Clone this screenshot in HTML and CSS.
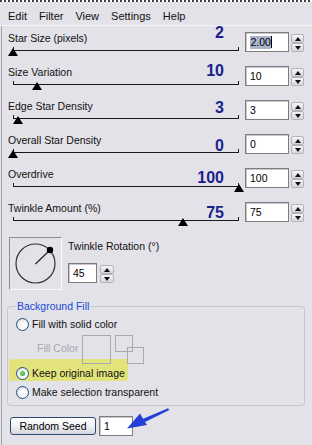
FILE: index.html
```html
<!DOCTYPE html>
<html>
<head>
<meta charset="utf-8">
<link rel="stylesheet" href="styles.css">
</head>
<body>
<div class="marquee"></div>
<div class="menubar"><span>Edit</span><span>Filter</span><span>View</span><span>Settings</span><span>Help</span></div>
<div class="panel">
  <div class="row">
    <div class="slider">
      <div class="label">Star Size (pixels)</div>
      <div class="track"><span class="thumb" style="left:0px"></span></div>
      <span class="anno" style="top:-7px">2</span>
    </div>
    <div class="field"><span class="hl">2.00</span><span class="caret"></span></div>
    <div class="spin"><span class="sb up"></span><span class="sb down"></span></div>
  </div>
  <div class="row">
    <div class="slider">
      <div class="label">Size Variation</div>
      <div class="track"><span class="thumb" style="left:24px"></span></div>
      <span class="anno" style="top:-3px">10</span>
    </div>
    <div class="field">10</div>
    <div class="spin"><span class="sb up"></span><span class="sb down"></span></div>
  </div>
  <div class="row">
    <div class="slider">
      <div class="label">Edge Star Density</div>
      <div class="track"><span class="thumb" style="left:5px"></span></div>
      <span class="anno" style="top:0px">3</span>
    </div>
    <div class="field">3</div>
    <div class="spin"><span class="sb up"></span><span class="sb down"></span></div>
  </div>
  <div class="row">
    <div class="slider">
      <div class="label">Overall Star Density</div>
      <div class="track"><span class="thumb" style="left:0px"></span></div>
      <span class="anno" style="top:4px">0</span>
    </div>
    <div class="field">0</div>
    <div class="spin"><span class="sb up"></span><span class="sb down"></span></div>
  </div>
  <div class="row">
    <div class="slider">
      <div class="label">Overdrive</div>
      <div class="track"><span class="thumb" style="left:226px"></span></div>
      <span class="anno" style="top:2px">100</span>
    </div>
    <div class="field">100</div>
    <div class="spin"><span class="sb up"></span><span class="sb down"></span></div>
  </div>
  <div class="row">
    <div class="slider">
      <div class="label">Twinkle Amount (%)</div>
      <div class="track"><span class="thumb" style="left:170px"></span></div>
      <span class="anno" style="top:3px">75</span>
    </div>
    <div class="field">75</div>
    <div class="spin"><span class="sb up"></span><span class="sb down"></span></div>
  </div>

  <div class="rot">
    <div class="dial">
      <svg width="51" height="51" viewBox="0 0 51 51">
        <circle cx="25.5" cy="25.5" r="19.5" fill="none" stroke="#333" stroke-width="1.2"/>
        <line x1="25.5" y1="26" x2="40" y2="12" stroke="#222" stroke-width="1.2"/>
        <circle cx="40" cy="12" r="3.2" fill="#000"/>
      </svg>
    </div>
    <div class="rot-ctl">
      <div class="rlabel">Twinkle Rotation (°)</div>
      <div class="ctl">
        <div class="field small">45</div>
        <div class="spin"><span class="sb up"></span><span class="sb down"></span></div>
      </div>
    </div>
  </div>

  <fieldset class="group">
    <legend>Background Fill</legend>
    <div class="opt first"><span class="radio"></span><span>Fill with solid color</span></div>
    <div class="fillrow">
      <span class="fclabel">Fill Color</span>
      <span class="swatch"></span>
      <span class="pair"><span class="sq a"></span><span class="sq b"></span></span>
    </div>
    <div class="opt hilite"><span class="radio on"></span><span>Keep original image</span></div>
    <div class="opt last"><span class="radio"></span><span>Make selection transparent</span></div>
  </fieldset>

  <div class="seedrow">
    <div class="btn">Random Seed</div>
    <div class="field seed">1</div>
  </div>
</div>
<svg class="arrow" width="60" height="36" viewBox="0 0 60 36">
  <path d="M48 8.2 L49.3 10 L24 22.6 L22 19.2 Z" fill="#2440d8"/>
  <path d="M7 28.5 L20 13.5 L23.5 19.5 L27 25 Z" fill="#2440d8"/>
</svg>
</body>
</html>
```

FILE: styles.css
```css
html, body {
  margin: 0;
  padding: 0;
}
body {
  width: 312px;
  height: 445px;
  overflow: hidden;
  background: #e3e2e8;
  font-family: "Liberation Sans", Arial, sans-serif;
  font-size: 10.5px;
  color: #111;
  position: relative;
}
.marquee {
  height: 2px;
  background: repeating-linear-gradient(90deg, #444 0 2px, #fff 2px 4px);
}
.menubar {
  height: 24px;
  box-sizing: border-box;
  padding: 8px 0 0 8px;
  display: flex;
  gap: 12px;
  font-size: 11px;
  line-height: 13px;
  border-bottom: 1px solid #f4f4f6;
}
.panel {
  margin-left: 1px;
  border-left: 1px solid #a3a3a8;
  padding-top: 6px;
  height: 420px;
}
.row {
  display: flex;
  height: 34px;
}
.slider {
  width: 243px;
  position: relative;
}
.label {
  padding-left: 6px;
  line-height: 12px;
  white-space: nowrap;
}
.track {
  margin: 6px 0 0 11px;
  width: 226px;
  height: 1px;
  background: #1a1a1a;
  position: relative;
}
.track::before, .track::after {
  content: "";
  position: absolute;
  top: -3px;
  width: 1px;
  height: 3px;
  background: #1a1a1a;
}
.track::before { left: 0; }
.track::after { right: 0; }
.thumb {
  position: absolute;
  top: -2px;
  margin-left: -5px;
  width: 0;
  height: 0;
  border-left: 5.5px solid transparent;
  border-right: 5.5px solid transparent;
  border-bottom: 8px solid #000;
}
.anno {
  position: absolute;
  right: 21px;
  font-size: 16px;
  line-height: 16px;
  font-weight: bold;
  color: #1b1f8e;
}
.field {
  width: 44px;
  height: 20px;
  box-sizing: border-box;
  background: #fff;
  border: 1px solid #7d7d80;
  box-shadow: inset 1px 1px 0 #c8c8cc;
  padding: 3px 0 0 4px;
  font-size: 10.5px;
  line-height: 13px;
  color: #000;
  display: flex;
  align-items: flex-start;
}
.hl {
  background: #a9b4cb;
  padding: 0 0.5px;
}
.caret {
  width: 1px;
  height: 12px;
  background: #000;
}
.spin {
  margin: 2px 0 0 2px;
  width: 13px;
  display: flex;
  flex-direction: column;
}
.sb {
  height: 9px;
  box-sizing: border-box;
  border: 1px solid #b3b2b9;
  border-radius: 2px;
  background: linear-gradient(#f6f6f8, #d6d6dc);
  position: relative;
}
.sb::after {
  content: "";
  position: absolute;
  left: 2.5px;
  top: 2px;
  border-left: 3.5px solid transparent;
  border-right: 3.5px solid transparent;
}
.sb.up::after { border-bottom: 4px solid #111; }
.sb.down::after { border-top: 4px solid #111; top: 2px; }

.rot {
  display: flex;
  margin-top: 1px;
}
.dial {
  margin-left: 7px;
  width: 53px;
  height: 53px;
  box-sizing: border-box;
  border: 1px solid;
  border-color: #8e8e92 #fafafa #fafafa #8e8e92;
}
.dial svg { display: block; }
.rot-ctl {
  margin-left: 6px;
  padding-top: 3px;
}
.rlabel {
  line-height: 12px;
}
.ctl {
  display: flex;
  margin-top: 11px;
}
.field.small {
  width: 29px;
}
.ctl .spin {
  margin-left: 3px;
  width: 14px;
}

.group {
  margin: 10px 0 0 5px;
  width: 298px;
  box-sizing: border-box;
  border: 1px solid #c6c5cc;
  border-radius: 4px;
  padding: 0 8px 6px 8px;
  min-inline-size: 0;
}
.group legend {
  padding: 0 1px;
  margin: 0;
  color: #1849d6;
  font-size: 10.5px;
  line-height: 12px;
}
.opt {
  display: flex;
  align-items: center;
  gap: 3px;
  height: 13px;
  line-height: 13px;
  white-space: nowrap;
}
.opt.first { margin-top: 6px; }
.radio {
  width: 13px;
  height: 13px;
  box-sizing: border-box;
  border-radius: 50%;
  border: 1px solid #1f4e7e;
  background: radial-gradient(circle at 60% 65%, #fdfdfd 0 35%, #dcdce2 80%);
  position: relative;
  flex: none;
}
.radio.on::after {
  content: "";
  position: absolute;
  left: 3px;
  top: 3px;
  width: 5px;
  height: 5px;
  border-radius: 50%;
  background: radial-gradient(circle at 40% 40%, #7ce07c, #1f9a1f);
}
.fillrow {
  margin-top: 4px;
  height: 29px;
  display: flex;
  align-items: flex-start;
}
.fclabel {
  margin: 7px 0 0 21px;
  width: 45px;
  line-height: 12px;
  color: #a7a7ae;
}
.swatch {
  width: 29px;
  height: 29px;
  box-sizing: border-box;
  border: 1px solid #a9a9ae;
}
.pair {
  margin-left: 4px;
  width: 30px;
  height: 29px;
  position: relative;
}
.sq {
  position: absolute;
  box-sizing: border-box;
  border: 1px solid #a9a9ae;
}
.sq.a { left: 0; top: 0; width: 18px; height: 17px; }
.sq.b { left: 12px; top: 12px; width: 17px; height: 17px; }
.opt.hilite {
  margin: -5px 0 0 -7px;
  width: 119px;
  height: 22px;
  box-sizing: border-box;
  padding: 8px 0 1px 7px;
  background: #e3e37c;
  border-radius: 3px;
  align-items: flex-end;
}
.opt.last { margin-top: 5px; }

.seedrow {
  display: flex;
  align-items: center;
  margin: 10px 0 0 8px;
}
.btn {
  width: 86px;
  height: 18px;
  box-sizing: border-box;
  border: 1px solid #2c4a6e;
  border-radius: 3px;
  background: linear-gradient(#ffffff, #f2f2f5 50%, #d5d5dd);
  text-align: center;
  line-height: 16px;
  color: #000;
}
.field.seed {
  margin-left: 3px;
  width: 34px;
}
.arrow {
  position: absolute;
  left: 120px;
  top: 400px;
}
```
